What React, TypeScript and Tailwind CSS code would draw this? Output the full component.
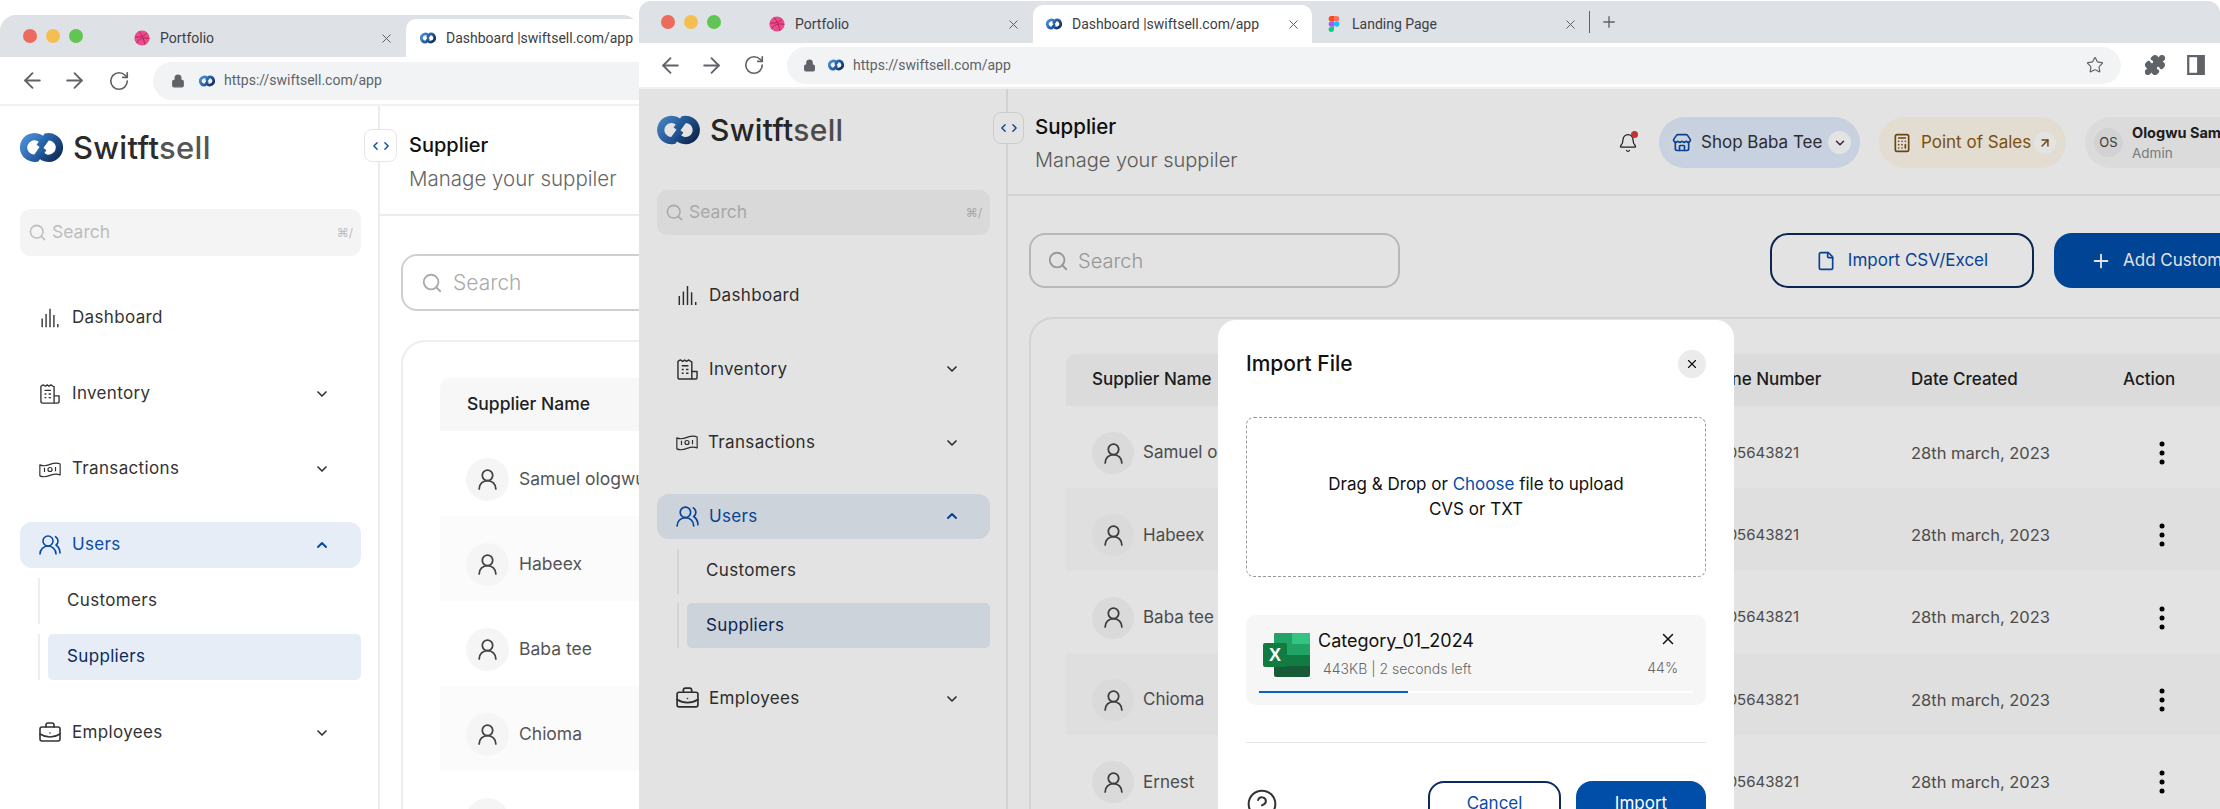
import { useId } from 'react';
import {
  ArrowLeft,
  ArrowRight,
  ArrowUpRight,
  Bell,
  BriefcaseBusiness,
  Calculator,
  ChevronDown,
  ChevronLeft,
  ChevronRight,
  ChevronUp,
  CircleHelp,
  File,
  Lock,
  Plus,
  Puzzle,
  RotateCw,
  Search,
  Star,
  Store,
  UserRound,
  UsersRound,
  X,
} from 'lucide-react';

const suppliers = ['Samuel ologwu', 'Habeex', 'Baba tee', 'Chioma', 'Ernest'];

function Logo({ className }: { className: string }) {
  const id = useId();
  return (
    <svg viewBox="0 0 44 31" className={className} fill="none">
      <defs>
        <linearGradient id={`${id}a`} x1="0" y1="0" x2="1" y2="1">
          <stop offset="0" stopColor="#4b8fd6" />
          <stop offset="1" stopColor="#1d4f96" />
        </linearGradient>
        <linearGradient id={`${id}b`} x1="0" y1="0" x2="1" y2="1">
          <stop offset="0" stopColor="#2f74bf" />
          <stop offset="1" stopColor="#0f2a55" />
        </linearGradient>
      </defs>
      <path d="M23.7 9.2 A11 11 0 1 0 16.6 26.3 L24 16" stroke={`url(#${id}a)`} strokeWidth="7.5" />
      <path d="M20.3 21.8 A11 11 0 1 0 27.4 4.7 L20 15" stroke={`url(#${id}b)`} strokeWidth="7.5" />
    </svg>
  );
}

function DribbbleDot({ className }: { className: string }) {
  return (
    <svg viewBox="0 0 16 16" className={className} fill="none">
      <circle cx="8" cy="8" r="7.6" fill="#ea4c89" />
      <path d="M5 1.3c3 3.6 5 8 5.8 13.3M1 7c5 .4 9-.6 12-4M2.6 13c2-4 6-6 12.8-4.6" stroke="#b01f5c" strokeWidth="0.9" />
    </svg>
  );
}

function FigmaIcon({ className }: { className: string }) {
  return (
    <svg viewBox="0 0 12 18" className={className}>
      <path d="M3 0h3v6H3a3 3 0 0 1 0-6z" fill="#f24e1e" />
      <path d="M6 0h3a3 3 0 0 1 0 6H6z" fill="#ff7262" />
      <path d="M3 6h3v6H3a3 3 0 0 1 0-6z" fill="#a259ff" />
      <circle cx="9" cy="9" r="3" fill="#1abcfe" />
      <path d="M3 12h3v3a3 3 0 1 1-3-3z" fill="#0acf83" />
    </svg>
  );
}

function BarsIcon({ className }: { className: string }) {
  return (
    <svg viewBox="1 0 22 23" className={className} fill="none" stroke="currentColor" strokeWidth="1.6">
      <path d="M3 12v10M7.5 7v15M12 1v21M16.5 8v14M21 18.5v3.5" />
    </svg>
  );
}

function InventoryIcon({ className }: { className: string }) {
  return (
    <svg viewBox="1 1 22 22" className={className} fill="none" stroke="currentColor" strokeWidth="1.5" strokeLinejoin="round">
      <path d="M2 3.5 4.5 2 7 3.5 9 2l2 1.5L13 2l2.5 1.5 1 .5V22H4a2 2 0 0 1-2-2z" />
      <path d="M16.5 14H22v6a2 2 0 0 1-2 2h-3.5" />
      <path d="M6 8h7M6 12h2M10.5 12h2.5M6 16h2M10.5 16h2.5" />
    </svg>
  );
}

function CashIcon({ className }: { className: string }) {
  return (
    <svg viewBox="0 0 26 22" className={className} fill="none" stroke="currentColor" strokeWidth="1.4" strokeLinejoin="round">
      <path d="M1 5.5c4 2 8 1 12-.5s8-2.5 12-.5v13c-4-2-8-1-12 .5s-8 2.5-12 .5z" />
      <path d="M6.5 9v5M19.5 8v5" />
      <circle cx="13" cy="11" r="2.4" />
    </svg>
  );
}

function ExcelIcon({ className }: { className: string }) {
  return (
    <svg viewBox="0 0 47 44" className={className}>
      <rect x="11" y="0" width="36" height="44" rx="2" fill="#185c37" />
      <path d="M11 2a2 2 0 0 1 2-2h17v11H11z" fill="#21a366" />
      <path d="M29 0h16a2 2 0 0 1 2 2v9H29z" fill="#33c481" />
      <rect x="11" y="11" width="36" height="11" fill="#21a366" />
      <rect x="11" y="22" width="36" height="11" fill="#107c41" />
      <rect x="0" y="10" width="24" height="24" rx="2" fill="#107c41" />
      <text x="12" y="28" textAnchor="middle" fontSize="18" fontWeight="700" fill="#fff" fontFamily="Liberation Sans, sans-serif">
        X
      </text>
    </svg>
  );
}

function SidePanelIcon({ className }: { className: string }) {
  return (
    <svg viewBox="0 0 16 18" className={className} fill="none">
      <rect x="1" y="1" width="14" height="16" stroke="#5f6368" strokeWidth="2" />
      <rect x="9" y="1" width="6" height="16" fill="#5f6368" />
    </svg>
  );
}

function DotsIcon() {
  return (
    <svg viewBox="0 0 6 24" className="w-[6px] h-[24px]" fill="#000">
      <circle cx="3" cy="3" r="2.5" />
      <circle cx="3" cy="12" r="2.5" />
      <circle cx="3" cy="21" r="2.5" />
    </svg>
  );
}

const backStyle = {
  navText: 'text-[17px] tracking-[0.02em]',
  navRow: 'h-[46px] pl-5 pr-[31px] gap-3 rounded-[12px]',
  navIcon: 'w-5 h-5',
  navIconLg: 'w-[24px] h-[24px] -mx-[2px]',
  cashIcon: 'w-[22px] h-[19px] -mx-[1px]',
  navList: 'gap-y-[29.5px] mt-[39px]',
  sideBox: 'w-[380px] pl-5 pr-[17px] pt-[26px]',
  logoRow: 'gap-[10px] h-[31px]',
  logoIcon: 'w-[43px] h-[31px]',
  logoText: 'text-[31px]',
  search: 'mt-[46px] h-[47px] px-2 rounded-[10px]',
  subLine: 'ml-[18px] h-[46px]',
  subItem: 'ml-2 h-[46px] pl-[19px]',
  subGroup: 'gap-y-[10px]',
  empRow: 'mt-[0.5px]',
  header: 'h-[110px] pl-[29px]',
  title: 'text-[20px] pt-[4px]',
  subtitle: 'text-[20.5px] mt-[10px]',
  body: 'px-[21px] pt-[38px]',
  mainSearch: 'w-[400px] h-[57px] rounded-[16px] pl-[18px] gap-[10px]',
  mainSearchText: 'text-[21px]',
  card: 'mt-[29px] pt-[36px] px-[37px] w-[1400px]',
  th: 'h-[53px] pl-[27px] text-[17.5px] rounded-t-[10px]',
  tr: 'h-[85px] pl-[26px] pt-[12px] text-[17.5px]',
  avatar: 'w-[43px] h-[43px] mr-[10px]',
  toggle: 'left-[364px] w-[33px] h-[33px]',
} as const;

const frontStyle = {
  navText: 'text-[17px] tracking-[0.02em]',
  navRow: 'h-[45.5px] pl-[20px] pr-[30px] gap-[11px] rounded-[12px]',
  navIcon: 'w-[21px] h-[21px]',
  navIconLg: 'w-[25px] h-[25px] -mx-[2px]',
  cashIcon: 'w-[22px] h-[19px] -mx-[1px]',
  navList: 'gap-y-[28px] mt-[38px]',
  sideBox: 'w-[369px] pl-[18px] pr-[16px] pt-[26px]',
  logoRow: 'gap-[10px] h-[30px]',
  logoIcon: 'w-[43px] h-[30px]',
  logoText: 'text-[30px]',
  search: 'mt-[45px] h-[45px] px-2 rounded-[10px]',
  subLine: 'ml-[20px] h-[45px]',
  subItem: 'ml-2 h-[45px] pl-[19px]',
  subGroup: 'gap-y-[9.5px]',
  empRow: 'mt-[0px]',
  header: 'h-[107px] pl-[27px]',
  title: 'text-[20.5px] pt-[4px]',
  subtitle: 'text-[20px] mt-[9px]',
  body: 'px-[21px] pt-[37px]',
  mainSearch: 'w-[371px] h-[55px] rounded-[16px] pl-[16px] gap-[9px]',
  mainSearchText: 'text-[20px]',
  card: 'mt-[29px] pt-[35px] px-[35px] w-[1400px]',
  th: 'h-[52px] pl-[26px] text-[17px] rounded-t-[10px]',
  tr: 'h-[82.3px] pl-[26px] pt-[12px] text-[17px]',
  avatar: 'w-[42px] h-[42px] mr-[9px]',
  toggle: 'left-[354px] w-[31px] h-[32px]',
} as const;

type Look = typeof backStyle | typeof frontStyle;

function NavItem({
  look,
  label,
  icon,
  chevron,
  active,
  className,
}: {
  look: Look;
  label: string;
  icon: React.ReactNode;
  chevron?: boolean;
  active?: boolean;
  className?: string;
}) {
  return (
    <div
      className={`flex items-center ${look.navRow} ${look.navText} ${active ? 'bg-[#e6edf7] text-[#0a4ba8]' : 'text-[#333]'} ${className ?? ''}`}
    >
      {icon}
      <span className="flex-1">{label}</span>
      {chevron &&
        (active ? (
          <ChevronUp className="w-4 h-4 text-[#0a4ba8]" strokeWidth={3} />
        ) : (
          <ChevronDown className="w-4 h-4 text-[#333]" strokeWidth={2.5} />
        ))}
    </div>
  );
}

function Sidebar({ look }: { look: Look }) {
  return (
    <aside className={`shrink-0 border-r-2 border-[#ececec] ${look.sideBox}`}>
      <div className={`flex items-center ${look.logoRow}`}>
        <Logo className={look.logoIcon} />
        <span className={`${look.logoText} font-medium leading-none text-[#2b2b2b] tracking-[0.01em]`}>
          Switft<span className="text-[#555]">sell</span>
        </span>
      </div>
      <div className={`flex items-center gap-[5px] bg-[#f4f4f4] text-[#bdbdbd] ${look.search}`}>
        <Search className="w-[19px] h-[19px]" />
        <span className="text-[17.5px] flex-1">Search</span>
        <span className="text-[12px]">⌘/</span>
      </div>
      <div className={`flex flex-col ${look.navList}`}>
        <NavItem look={look} label="Dashboard" icon={<BarsIcon className={look.navIcon} />} />
        <NavItem look={look} label="Inventory" chevron icon={<InventoryIcon className={look.navIcon} />} />
        <NavItem look={look} label="Transactions" chevron icon={<CashIcon className={look.cashIcon} />} />
        <div className={`flex flex-col ${look.subGroup}`}>
          <NavItem look={look} label="Users" chevron active icon={<UsersRound className={look.navIconLg} strokeWidth={1.6} />} />
          <div className={`flex items-center border-l-2 border-[#eee] ${look.subLine}`}>
            <div className={`flex items-center ${look.subItem} ${look.navText} text-[#333]`}>Customers</div>
          </div>
          <div className={`flex items-center border-l-2 border-[#eee] ${look.subLine}`}>
            <div className={`flex flex-1 items-center rounded-[5px] bg-[#e6edf7] text-[#0c2a5c] ${look.subItem} ${look.navText}`}>
              Suppliers
            </div>
          </div>
        </div>
        <NavItem look={look} label="Employees" chevron className={look.empRow} icon={<BriefcaseBusiness className={look.navIconLg} strokeWidth={1.6} />} />
      </div>
    </aside>
  );
}

function SupplierRows({ look, front }: { look: Look; front: boolean }) {
  return (
    <>
      <div className={`flex items-center bg-[#f7f7f7] font-medium text-[#222] ${look.th}`}>
        <span className="w-[608px] shrink-0">Supplier Name</span>
        {front && (
          <>
            <span className="w-[120px] text-right shrink-0 whitespace-nowrap">Phone Number</span>
            <span className="ml-[91px] w-[212px] shrink-0">Date Created</span>
            <span>Action</span>
          </>
        )}
      </div>
      {suppliers.map((name, i) => (
        <div key={name} className={`flex items-center text-[#555] ${look.tr} ${i % 2 === 1 ? 'bg-[#fbfbfb]' : ''}`}>
          <div className="flex items-center w-[608px] shrink-0">
            <span className={`flex items-center justify-center rounded-full bg-[#f5f5f5] shrink-0 ${look.avatar}`}>
              <UserRound className="w-[25px] h-[25px] text-[#444]" strokeWidth={1.7} />
            </span>
            {name}
          </div>
          {front && (
            <>
              <span className="w-[120px] pr-[21px] text-right text-[15px] shrink-0">08105643821</span>
              <span className="ml-[91px] w-[212px] text-[16.5px] shrink-0">28th march, 2023</span>
              <span className="ml-[36px]">
                <DotsIcon />
              </span>
            </>
          )}
        </div>
      ))}
    </>
  );
}

function PageHeader({ look, front }: { look: Look; front: boolean }) {
  return (
    <header className={`flex items-center border-b-2 border-[#ececec] ${look.header}`}>
      <div className={front ? 'w-[583px] shrink-0' : 'shrink-0'}>
        <h1 className={`${look.title} font-medium leading-6 text-[#111]`}>Supplier</h1>
        <p className={`${look.subtitle} font-light leading-6 text-[#666]`}>Manage your suppiler</p>
      </div>
      {front && (
        <div className="flex items-center shrink-0 pt-[2px]">
          <span className="relative w-5 h-6 flex items-center justify-center">
            <Bell className="w-[22px] h-[22px] text-[#222]" strokeWidth={1.5} />
            <span className="absolute top-0 right-0 w-[7px] h-[7px] rounded-full bg-[#d33a3a]" />
          </span>
          <div className="ml-[21px] w-[201px] h-[51px] rounded-full bg-[#e0ebfb] flex items-center pl-[9px] pr-[9px] text-[17px] text-[#333]">
            <span className="w-[27px] h-[27px] rounded-full bg-[#e6edf7] flex items-center justify-center">
              <Store className="w-[20px] h-[20px] text-[#0a4ba8]" strokeWidth={2} />
            </span>
            <span className="ml-[6px] flex-1 whitespace-nowrap">Shop Baba Tee</span>
            <span className="w-[23px] h-[23px] rounded-full bg-white flex items-center justify-center">
              <ChevronDown className="w-[14px] h-[14px]" strokeWidth={2.5} />
            </span>
          </div>
          <div className="ml-[19px] w-[187px] h-[51px] rounded-full bg-[#fff8ea] flex items-center pl-[9px] pr-[10px] text-[17px] text-[#8a5a12]">
            <span className="w-[27px] h-[27px] rounded-full bg-[#fdfaf2] flex items-center justify-center">
              <Calculator className="w-[20px] h-[20px] text-[#7b4f0e]" strokeWidth={2} />
            </span>
            <span className="ml-[6px] flex-1 whitespace-nowrap">Point of Sales</span>
            <span className="w-[22px] h-[22px] rounded-full bg-white flex items-center justify-center">
              <ArrowUpRight className="w-[14px] h-[14px] text-[#7b4f0e]" strokeWidth={2.5} />
            </span>
          </div>
          <div className="ml-[19px] w-[200px] h-[51px] rounded-l-full bg-[#f7f7f7] flex items-center pl-[9px]">
            <span className="w-[29px] h-[29px] rounded-full bg-[#ececec] flex items-center justify-center text-[13px] text-[#444]">OS</span>
            <div className="ml-[9px] leading-tight">
              <p className="text-[14.5px] font-bold text-[#222] whitespace-nowrap">Ologwu Samuel</p>
              <p className="text-[13.5px] text-[#888] mt-[3px]">Admin</p>
            </div>
          </div>
        </div>
      )}
    </header>
  );
}

function MainArea({ look, front }: { look: Look; front: boolean }) {
  return (
    <main className="flex-1 min-w-0">
      <PageHeader look={look} front={front} />
      <div className={look.body}>
        <div className="flex items-start">
          <div className={`flex items-center border-2 border-[#cfcfcf] shrink-0 ${look.mainSearch}`}>
            <Search className="w-[22px] h-[22px] text-[#aaa]" />
            <span className={`${look.mainSearchText} font-light text-[#aaa]`}>Search</span>
          </div>
          {front && (
            <>
              <button className="ml-[370px] w-[264px] h-[55px] rounded-[18px] border-2 border-[#0c2a5c] text-[#0a4ba8] text-[17px] flex items-center justify-center gap-3 shrink-0">
                <File className="w-[20px] h-[22px]" strokeWidth={2} />
                Import CSV/Excel
              </button>
              <button className="ml-[20px] w-[260px] h-[55px] rounded-[18px] bg-[#004ea8] text-white text-[17px] flex items-center pl-[36px] gap-[11px] shrink-0 whitespace-nowrap">
                <Plus className="w-[22px] h-[22px]" strokeWidth={2} />
                Add Customer
              </button>
            </>
          )}
        </div>
        <div className={`rounded-tl-[24px] border-l-2 border-t-2 border-[#eee] ${look.card}`}>
          <SupplierRows look={look} front={front} />
        </div>
      </div>
    </main>
  );
}

function ImportModal() {
  return (
    <div className="absolute left-[579px] top-[231px] w-[516px] h-[560px] rounded-[18px] bg-white px-[28px] pt-[30px] text-[#111]">
      <div className="flex items-center justify-between h-[28px]">
        <h2 className="text-[21px] font-medium">Import File</h2>
        <span className="w-[28px] h-[28px] rounded-full bg-[#ebebeb] flex items-center justify-center">
          <X className="w-[14px] h-[14px]" strokeWidth={2} />
        </span>
      </div>
      <div className="mt-[39px] h-[160px] rounded-[8px] border border-dashed border-[#9a9a9a] flex flex-col items-center justify-center text-[17px] leading-[25px]">
        <p>
          Drag &amp; Drop or <span className="text-[#0a4ba8]">Choose</span> file to upload
        </p>
        <p>CVS or TXT</p>
      </div>
      <div className="mt-[38px] h-[90px] rounded-[10px] bg-[#f6f6f6] pt-[18px] px-[13px]">
        <div className="flex pl-[4px] pr-[15px]">
          <ExcelIcon className="w-[47px] h-[44px] shrink-0" />
          <div className="ml-[8px] flex-1 -mt-[4px]">
            <p className="text-[18px] leading-[24px]">Category_01_2024</p>
            <p className="ml-[5px] mt-[5px] text-[14px] text-[#666] font-light">443KB | 2 seconds left</p>
          </div>
          <div className="flex flex-col items-end -mt-[3px]">
            <X className="w-[18px] h-[18px] mr-[1px]" strokeWidth={2} />
            <p className="mt-[9px] text-[14px] text-[#666] font-light">44%</p>
          </div>
        </div>
        <div className="mt-[12px] h-[2px] bg-white">
          <div className="h-[2px] bg-[#0a5fd0]" style={{ width: `${(149 / 434) * 100}%` }} />
        </div>
      </div>
      <div className="mt-[37px] h-[1px] bg-[#e8e8e8]" />
      <div className="mt-[38px] flex items-start">
        <CircleHelp className="mt-[7px] w-[32px] h-[32px] text-[#333]" strokeWidth={1.5} />
        <button className="ml-auto w-[133px] h-[46px] rounded-[16px] border-2 border-[#0c2a5c] text-[#0a4ba8] text-[17px]">Cancel</button>
        <button className="ml-[15px] w-[130px] h-[46px] rounded-[16px] bg-[#004ea8] text-white text-[17px]">Import</button>
      </div>
    </div>
  );
}

function ToggleButton({ look }: { look: Look }) {
  return (
    <span className={`absolute top-[23px] flex items-center justify-center rounded-[8px] bg-white border border-[#e6e6e6] text-[#0a4ba8] ${look.toggle}`}>
      <ChevronLeft className="w-[13px] h-[16px] -mr-[1px]" strokeWidth={2.5} />
      <ChevronRight className="w-[13px] h-[16px] -ml-[1px]" strokeWidth={2.5} />
    </span>
  );
}

function Tab({
  title,
  icon,
  active,
  className,
}: {
  title: string;
  icon: React.ReactNode;
  active?: boolean;
  className: string;
}) {
  return (
    <div
      className={`flex items-center gap-[10px] shrink-0 rounded-t-[10px] font-['Roboto',sans-serif] text-[14px] text-[#3c4043] ${className} ${active ? 'bg-white' : ''}`}
    >
      {icon}
      <span className="flex-1 whitespace-nowrap">{title}</span>
      <X className="w-[15px] h-[15px] text-[#5f6368] shrink-0" strokeWidth={1.6} />
    </div>
  );
}

function TrafficLights({ className }: { className: string }) {
  return (
    <div className={`flex items-center gap-[9px] shrink-0 ${className}`}>
      <span className="w-[14px] h-[14px] rounded-full bg-[#ed6a5e]" />
      <span className="w-[14px] h-[14px] rounded-full bg-[#f5bf4f]" />
      <span className="w-[14px] h-[14px] rounded-full bg-[#61c554]" />
    </div>
  );
}

function BackWindow() {
  return (
    <section className="absolute left-0 top-[15px] w-[639px] h-[794px] overflow-hidden rounded-t-[16px] bg-white">
      <div className="flex h-[42px] items-end bg-[#dee1e6]">
        <TrafficLights className="w-[124px] h-full pl-[23px]" />
        <Tab title="Portfolio" icon={<DribbbleDot className="w-4 h-4" />} className="w-[282px] h-[38px] pl-[10px] pr-[12px]" />
        <Tab title="Dashboard |swiftsell.com/app" active icon={<Logo className="w-4 h-[14px]" />} className="w-[279px] h-[38px] pl-[14px] pr-[11px]" />
      </div>
      <div className="flex h-[47px] items-center">
        <div className="flex items-center gap-[17px] pl-[20px] w-[153px] shrink-0 text-[#5f6368]">
          <ArrowLeft className="w-[25px] h-[25px]" strokeWidth={1.8} />
          <ArrowRight className="w-[25px] h-[25px]" strokeWidth={1.8} />
          <RotateCw className="w-[22px] h-[22px] ml-[4px]" strokeWidth={1.8} />
        </div>
        <div className="flex flex-1 items-center h-[38px] rounded-l-full bg-[#f1f3f4] pl-[18px] font-['Roboto',sans-serif] text-[14px] text-[#5f6368]">
          <Lock className="w-[14px] h-[14px] fill-[#5f6368]" />
          <Logo className="w-4 h-[14px] ml-[14px]" />
          <span className="ml-[9px]">https://swiftsell.com/app</span>
        </div>
      </div>
      <div className="h-[2px] bg-[#f1f1f1]" />
      <div className="relative flex h-[703px] overflow-hidden">
        <Sidebar look={backStyle} />
        <MainArea look={backStyle} front={false} />
        <ToggleButton look={backStyle} />
      </div>
    </section>
  );
}

function FrontWindow() {
  return (
    <section className="absolute left-[639px] top-[1px] w-[1581px] h-[808px] overflow-hidden rounded-t-[12px] bg-white">
      <div className="flex h-[42px] items-end bg-[#dee1e6]">
        <TrafficLights className="w-[116px] h-full pl-[22px]" />
        <Tab title="Portfolio" icon={<DribbbleDot className="w-4 h-4" />} className="w-[278px] h-[38px] pl-[14px] pr-[12px]" />
        <Tab title="Dashboard |swiftsell.com/app" active icon={<Logo className="w-4 h-[14px]" />} className="w-[279px] h-[38px] pl-[13px] pr-[11px]" />
        <Tab title="Landing Page" icon={<FigmaIcon className="w-4 h-4" />} className="w-[278px] h-[38px] pl-[14px] pr-[12px]" />
        <div className="self-center -ml-[1px] w-[1px] h-[22px] bg-[#5f6368] shrink-0" />
        <Plus className="self-center ml-[10px] w-[18px] h-[18px] text-[#5f6368]" strokeWidth={1.8} />
      </div>
      <div className="flex h-[44px] items-center">
        <div className="flex items-center gap-[16px] pl-[19px] w-[148px] shrink-0 text-[#5f6368]">
          <ArrowLeft className="w-[25px] h-[25px]" strokeWidth={1.8} />
          <ArrowRight className="w-[25px] h-[25px]" strokeWidth={1.8} />
          <RotateCw className="w-[22px] h-[22px] ml-[3px]" strokeWidth={1.8} />
        </div>
        <div className="flex w-[1334px] items-center h-[37px] rounded-full bg-[#f1f3f4] pl-[16px] pr-[17px] font-['Roboto',sans-serif] text-[14px] text-[#5f6368]">
          <Lock className="w-[13px] h-[13px] fill-[#5f6368]" />
          <Logo className="w-4 h-[14px] ml-[12px]" />
          <span className="ml-[9px] flex-1">https://swiftsell.com/app</span>
          <Star className="w-[18px] h-[18px]" strokeWidth={1.6} />
        </div>
        <Puzzle className="ml-[23px] w-[22px] h-[22px] fill-[#5f6368] text-[#5f6368]" />
        <SidePanelIcon className="ml-[21px] w-[18px] h-[20px]" />
      </div>
      <div className="h-[2px] bg-[#f1f1f1]" />
      <div className="relative flex h-[720px] overflow-hidden">
        <Sidebar look={frontStyle} />
        <MainArea look={frontStyle} front />
        <ToggleButton look={frontStyle} />
        <div className="absolute inset-0 bg-black/[0.11]" />
        <ImportModal />
      </div>
    </section>
  );
}

export default function App() {
  return (
    <div className="relative w-[2220px] h-[809px] overflow-hidden bg-white font-['Inter',sans-serif]">
      <BackWindow />
      <FrontWindow />
    </div>
  );
}
